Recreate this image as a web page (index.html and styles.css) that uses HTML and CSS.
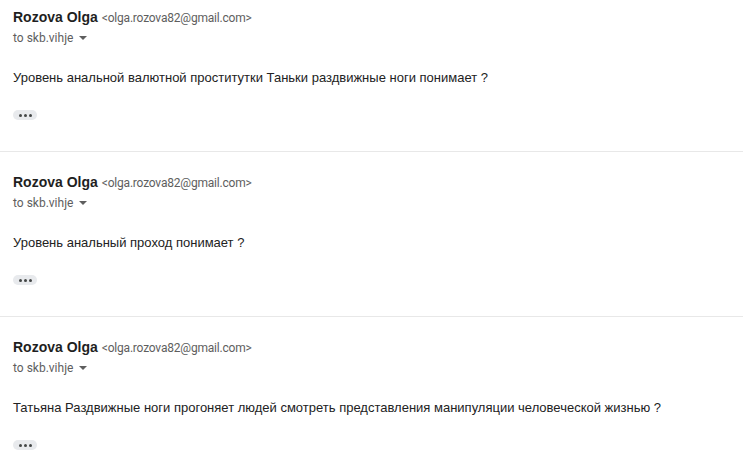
FILE: index.html
```html
<!DOCTYPE html>
<html lang="ru">
<head>
    <meta charset="UTF-8">
    <title>Rozova Olga</title>
    <link rel="stylesheet" href="styles.css">
</head>
<body>
    <div class="thread">
        <div class="message">
            <div class="sender"><span class="name">Rozova Olga</span> <span class="email">&lt;olga.rozova82@gmail.com&gt;</span></div>
            <div class="recipient">to skb.vihje <span class="caret"></span></div>
            <div class="body">Уровень анальной валютной проститутки Таньки раздвижные ноги понимает ?</div>
            <div class="more"><span></span><span></span><span></span></div>
        </div>

        <div class="message">
            <div class="sender"><span class="name">Rozova Olga</span> <span class="email">&lt;olga.rozova82@gmail.com&gt;</span></div>
            <div class="recipient">to skb.vihje <span class="caret"></span></div>
            <div class="body">Уровень анальный проход понимает ?</div>
            <div class="more"><span></span><span></span><span></span></div>
        </div>

        <div class="message">
            <div class="sender"><span class="name">Rozova Olga</span> <span class="email">&lt;olga.rozova82@gmail.com&gt;</span></div>
            <div class="recipient">to skb.vihje <span class="caret"></span></div>
            <div class="body">Татьяна Раздвижные ноги прогоняет людей смотреть представления манипуляции человеческой жизнью ?</div>
            <div class="more"><span></span><span></span><span></span></div>
        </div>
    </div>
</body>
</html>
```

FILE: styles.css
```css
* {
    margin: 0;
    padding: 0;
    box-sizing: border-box;
}

body {
    font-family: Roboto, Arial, sans-serif;
    background: #fff;
    color: #222;
    overflow: hidden;
}

.message {
    padding: 20px 13px 31px;
    border-bottom: 1px solid #e8e8e8;
}

.message:first-child {
    padding-top: 7px;
}

.sender {
    line-height: 20px;
    white-space: nowrap;
}

.name {
    font-family: "Liberation Sans", Arial, sans-serif;
    font-size: 14px;
    font-weight: bold;
    color: #1f1f1f;
}

.email {
    font-size: 12px;
    letter-spacing: -0.2px;
    color: #5e5e5e;
}

.recipient {
    font-size: 12px;
    line-height: 20px;
    color: #5e5e5e;
    display: flex;
    align-items: center;
    gap: 6px;
}

.caret {
    width: 0;
    height: 0;
    border-left: 4px solid transparent;
    border-right: 4px solid transparent;
    border-top: 4px solid #5e5e5e;
}

.body {
    font-family: Arial, "Liberation Sans", sans-serif;
    font-size: 13px;
    line-height: 20px;
    margin-top: 20px;
    color: #222;
}

.more {
    margin-top: 22px;
    width: 24px;
    height: 10px;
    border-radius: 5px;
    background: #e8eaed;
    display: flex;
    align-items: center;
    justify-content: center;
    gap: 2px;
}

.more span {
    width: 3px;
    height: 3px;
    border-radius: 50%;
    background: #444746;
}
```
